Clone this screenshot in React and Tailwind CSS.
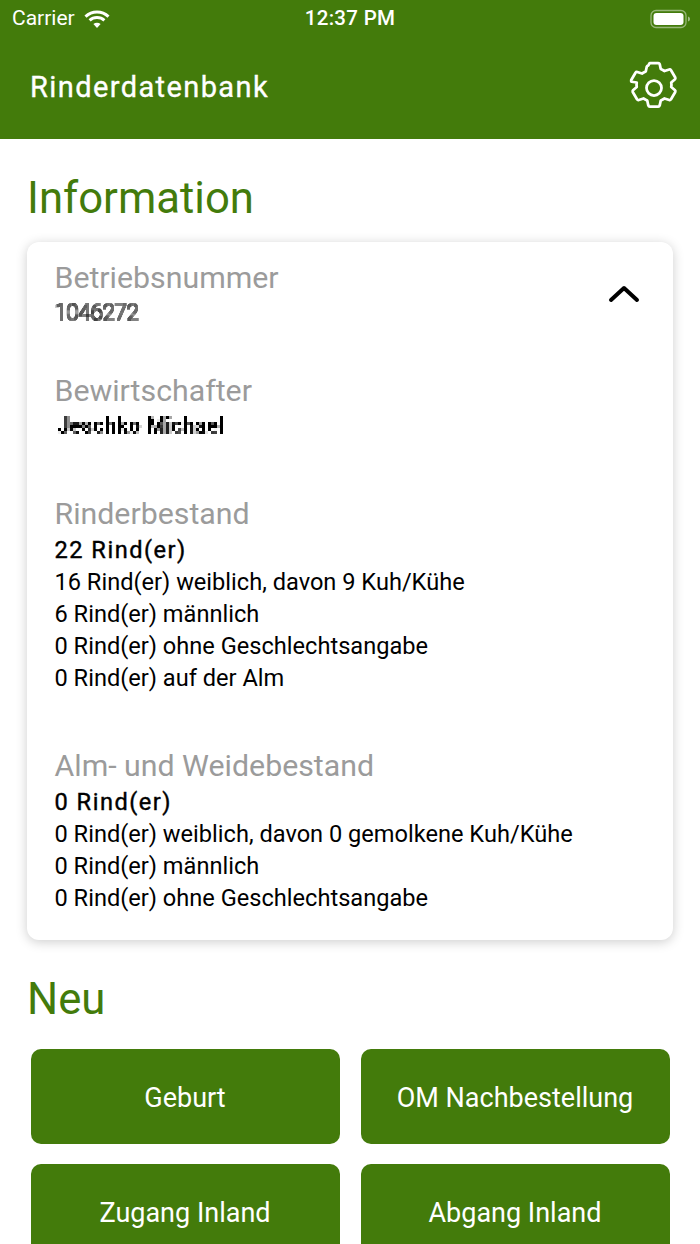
import React from "react";

const font = { fontFamily: "Roboto, sans-serif" };

function Wifi() {
  return (
    <svg width="26" height="20" viewBox="0 0 26 20" fill="none" className="block">
      <path d="M1.5 7.6C8 1.4 18 1.4 24.5 7.6" stroke="#fff" strokeWidth="3" />
      <path d="M5.6 11.4C9.8 7.6 16.2 7.6 20.4 11.4" stroke="#fff" strokeWidth="3" />
      <path d="M9.4 15C11.6 13.3 14.4 13.3 16.6 15L13 19Z" fill="#fff" />
    </svg>
  );
}

function Battery() {
  return (
    <svg width="42" height="20" viewBox="0 0 42 20" className="block">
      <rect x="1" y="1.5" width="35" height="17" rx="5" fill="none" stroke="#fff" strokeOpacity="0.45" strokeWidth="1.3" />
      <rect x="3.5" y="4" width="30" height="12" rx="3" fill="#fff" />
      <path d="M38 7.5C39.5 8 40 9 40 10s-.5 2-2 2.500Z" fill="#fff" fillOpacity="0.5" />
    </svg>
  );
}

function Gear() {
  return (
    <svg width="60" height="60" viewBox="0 0 24 24" fill="none" stroke="#fff" strokeWidth="1.1" strokeLinejoin="round" strokeLinecap="round" className="mt-[2px]">
      <path d="M10.3 2h3.400c.3 0 .5.200.6.500l.4 1.900c.5.200 1 .5 1.500.8l1.900-.6c.3-.1.500 0 .7.300l1.700 2.900c.1.300.1.500-.1.700l-1.500 1.300c.1.600.1 1.200 0 1.800l1.500 1.300c.2.200.2.500.1.700l-1.700 2.900c-.2.300-.4.400-.7.300l-1.900-.6c-.5.300-1 .6-1.500.8l-.4 1.900c-.1.300-.3.500-.6.500h-3.400c-.3 0-.5-.2-.6-.5l-.4-1.900c-.5-.2-1-.5-1.500-.8l-1.900.6c-.3.100-.5 0-.7-.3l-1.700-2.900c-.1-.3-.1-.5.100-.7l1.500-1.300c-.1-.6-.1-1.200 0-1.800L3 9.500c-.2-.2-.2-.4-.1-.7l1.700-2.900c.2-.3.400-.4.700-.3l1.900.6c.5-.3 1-.6 1.500-.8l.4-1.900c.1-.3.300-.5.600-.5Z" />
      <circle cx="12" cy="12" r="3" />
    </svg>
  );
}

function Block({ label, lines, mask, first, className }) {
  return (
    <div className={className}>
      <div className="text-[30.300px] leading-[32px] text-[#9b9b9b]">{label}</div>
      {mask || (
        <div className="mt-[4px] text-[23.6px] leading-[32px] text-black">
          {first && <div className="tracking-[1.5px] [-webkit-text-stroke:0.4px_#000]">{first}</div>}
          {lines && lines.map((l) => <div key={l}>{l}</div>)}
        </div>
      )}
    </div>
  );
}

function Btn({ children }) {
  return (
    <div className="flex h-[95px] items-center justify-center rounded-[10px] bg-[#437b0b] pt-[3px] text-[27px] text-white">
      {children}
    </div>
  );
}

export default function App() {
  return (
    <div className="h-[1244px] w-[700px] overflow-hidden bg-white" style={font}>
      <svg width="0" height="0" className="absolute">
        <filter id="px2" x="0" y="0" width="1" height="1">
          <feFlood x="0.500" y="0.500" width="1" height="1" />
          <feComposite width="2" height="2" />
          <feTile result="a" />
          <feComposite in="SourceGraphic" in2="a" operator="in" />
          <feMorphology operator="dilate" radius="1" />
        </filter>
        <filter id="px3" x="0" y="0" width="1" height="1">
          <feFlood x="1" y="1" width="1" height="1" />
          <feComposite width="3" height="3" />
          <feTile result="a" />
          <feComposite in="SourceGraphic" in2="a" operator="in" />
          <feMorphology operator="dilate" radius="1" />
        </filter>
      </svg>
      <header className="h-[139px] bg-[#437b0b] text-white">
        <div className="flex h-[36px] items-center justify-between pl-[12px] pr-[8px] pt-[1px]">
          <div className="flex w-[200px] items-center gap-[9px] text-[21px]">
            <span>Carrier</span>
            <Wifi />
          </div>
          <div className="pr-[4px] text-[20.500px] font-medium tracking-[0.3px]">12:37 PM</div>
          <div className="flex w-[200px] justify-end"><Battery /></div>
        </div>
        <div className="flex items-center justify-between pl-[30px] pr-[16px] pt-[2px]">
          <div className="text-[29px] leading-[98px] tracking-[1.4px] [-webkit-text-stroke:0.35px_#fff]">Rinderdatenbank</div>
          <Gear />
        </div>
      </header>

      <main className="px-[27px]">
        <h1 className="pt-[33px] text-[43.700px] leading-[52px] text-[#437b0b]">Information</h1>
        <section className="relative mt-[18px] h-[698px] rounded-[12px] bg-white pl-[27.500px] pr-[28px] pt-[20px] shadow-[0_2px_12px_rgba(0,0,0,0.2)]">
          <svg width="32" height="20" viewBox="0 0 32 20" fill="none" className="absolute right-[33px] top-[41px]">
            <path d="M3 17L16 5L29 17" stroke="#000" strokeWidth="4" strokeLinecap="round" strokeLinejoin="round" />
          </svg>
          <Block
            label="Betriebsnummer"
            mask={<div className="mt-[3px] h-[33px] text-[22px] font-thin leading-[32px] text-black [filter:url(#px2)_contrast(3)]">1046272</div>}
          />
          <Block
            className="mt-[45px]"
            label="Bewirtschafter"
            mask={<div className="mt-[3px] h-[33px] pl-[3px] text-[22px] font-bold leading-[32px] text-black [filter:url(#px3)]">Jeschko Michael</div>}
          />
          <Block className="mt-[55px]" label="Rinderbestand" first="22 Rind(er)" lines={["16 Rind(er) weiblich, davon 9 Kuh/Kühe", "6 Rind(er) männlich", "0 Rind(er) ohne Geschlechtsangabe", "0 Rind(er) auf der Alm"]} />
          <Block className="mt-[56px]" label="Alm- und Weidebestand" first="0 Rind(er)" lines={["0 Rind(er) weiblich, davon 0 gemolkene Kuh/Kühe", "0 Rind(er) männlich", "0 Rind(er) ohne Geschlechtsangabe"]} />
        </section>
        <h2 className="pt-[33px] text-[43.700px] leading-[52px] text-[#437b0b]">Neu</h2>
        <div className="mt-[24px] grid grid-cols-2 gap-x-[21px] gap-y-[20px] px-[3.500px]">
          <Btn>Geburt</Btn>
          <Btn>OM Nachbestellung</Btn>
          <Btn>Zugang Inland</Btn>
          <Btn>Abgang Inland</Btn>
        </div>
      </main>
    </div>
  );
}
